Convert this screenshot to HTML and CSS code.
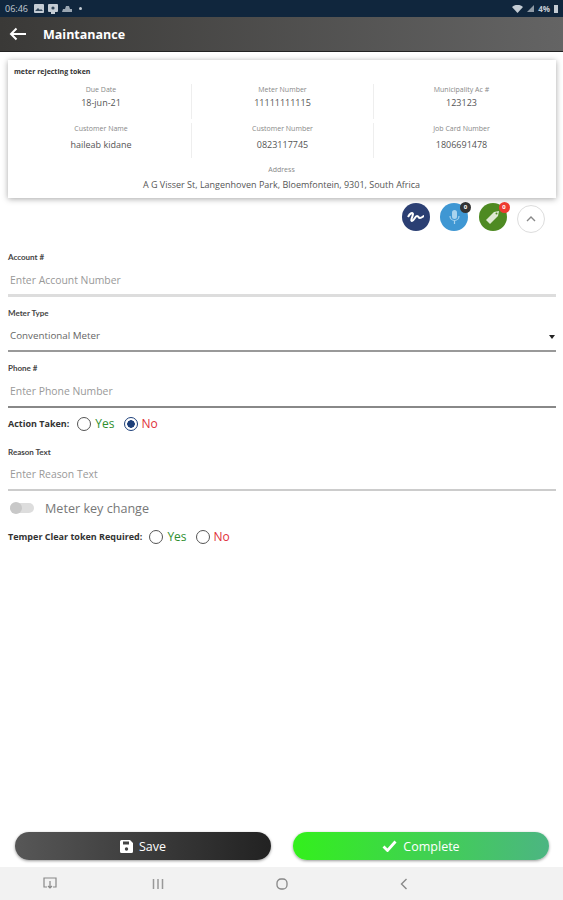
FILE: index.html
```html
<!DOCTYPE html>
<html lang="en">
<head>
  <meta charset="UTF-8">
  <title>Maintanance</title>
  <link rel="stylesheet" href="styles.css">
</head>
<body>

  <div class="statusbar">
    <div class="status-left">
      <span class="clock">06:46</span>
      <svg width="10" height="9" viewBox="0 0 10 9"><rect width="10" height="9" rx="1" fill="#c4ccd4"/><path d="M1 7l3-3 2 2 1-1 2 2z" fill="#33475a"/></svg>
      <svg width="10" height="10" viewBox="0 0 10 10"><rect width="10" height="8" rx="1" fill="#c4ccd4"/><rect x="3" y="8" width="4" height="2" fill="#c4ccd4"/><circle cx="5" cy="4" r="1.6" fill="#33475a"/></svg>
      <svg width="10" height="7" viewBox="0 0 10 7"><path d="M0 7l1-3h2l1-3h3l1 3h2v3z" fill="#9aa6b2"/></svg>
      <span class="dot"></span>
    </div>
    <div class="status-right">
      <svg width="11" height="8" viewBox="0 0 11 8"><path d="M0 2a8 8 0 0 1 11 0L5.500 8z" fill="#c4ccd4"/></svg>
      <svg width="7" height="7" viewBox="0 0 7 7"><path d="M7 0v7H0z" fill="#8e9aa6"/></svg>
      <span class="batt-text">4%</span>
      <span class="batt"></span>
    </div>
  </div>

  <div class="toolbar">
    <svg class="back" width="18" height="14" viewBox="0 0 18 14"><path d="M17 7H2M7.500 1.500L2 7l5.500 5.500" fill="none" stroke="#fff" stroke-width="2"/></svg>
    <span class="title">Maintanance</span>
  </div>

  <div class="card">
    <div class="card-title">meter rejecting token</div>
    <div class="info-grid">
      <div class="info"><div class="info-label">Due Date</div><div class="info-value">18-jun-21</div></div>
      <div class="info"><div class="info-label">Meter Number</div><div class="info-value">11111111115</div></div>
      <div class="info"><div class="info-label">Municipality Ac #</div><div class="info-value">123123</div></div>
      <div class="info"><div class="info-label">Customer Name</div><div class="info-value">haileab kidane</div></div>
      <div class="info"><div class="info-label">Customer Number</div><div class="info-value">0823117745</div></div>
      <div class="info"><div class="info-label">Job Card Number</div><div class="info-value">1806691478</div></div>
    </div>
    <div class="address">
      <div class="info-label">Address</div>
      <div class="info-value">A G Visser St, Langenhoven Park, Bloemfontein, 9301, South Africa</div>
    </div>
  </div>

  <div class="actions">
    <span class="action-btn navy">
      <svg width="18" height="12" viewBox="0 0 18 12"><path d="M1 6c2-4 5-5 5-3s-3 7-1 7 3-5 5-5 1 2 3 2 3-2 4-2" fill="none" stroke="#fff" stroke-width="2"/></svg>
    </span>
    <span class="action-btn blue">
      <svg width="11" height="16" viewBox="0 0 11 16"><rect x="3" y="1" width="5" height="9" rx="2.500" fill="#a9d3ee"/><path d="M1 7a4.500 4.500 0 0 0 9 0M5.500 12v3" fill="none" stroke="#a9d3ee" stroke-width="1.200"/></svg>
      <span class="badge dark">0</span>
    </span>
    <span class="action-btn green">
      <svg width="16" height="16" viewBox="0 0 16 16"><path d="M1 11l8-8 5-1-1 5-8 8z" fill="#dfe9d4"/><circle cx="11.500" cy="4.500" r="1" fill="#4e8a22"/></svg>
      <span class="badge red">0</span>
    </span>
    <span class="collapse-btn">
      <svg width="10" height="6" viewBox="0 0 10 6"><path d="M1 5l4-4 4 4" fill="none" stroke="#888" stroke-width="1.400"/></svg>
    </span>
  </div>

  <form class="form">
    <div class="field account">
      <label>Account #</label>
      <div class="input placeholder">Enter Account Number</div>
    </div>
    <div class="field meter">
      <label>Meter Type</label>
      <div class="input select">Conventional Meter<span class="caret"></span></div>
    </div>
    <div class="field phone">
      <label>Phone #</label>
      <div class="input placeholder">Enter Phone Number</div>
    </div>
    <div class="radio-row action">
      <span class="radio-label">Action Taken:</span>
      <span class="radio"></span><span class="yes">Yes</span>
      <span class="radio checked"></span><span class="no">No</span>
    </div>
    <div class="field reason">
      <label>Reason Text</label>
      <div class="input placeholder">Enter Reason Text</div>
    </div>
    <div class="toggle-row">
      <span class="toggle"><span class="knob"></span></span>
      <span class="toggle-label">Meter key change</span>
    </div>
    <div class="radio-row temper">
      <span class="radio-label">Temper Clear token Required:</span>
      <span class="radio"></span><span class="yes">Yes</span>
      <span class="radio"></span><span class="no">No</span>
    </div>
  </form>

  <div class="buttons">
    <div class="btn save">
      <svg width="13" height="13" viewBox="0 0 13 13"><path d="M1.500 0H10l3 3v8.500a1.500 1.500 0 0 1-1.500 1.500h-10A1.500 1.500 0 0 1 0 11.500v-10A1.500 1.500 0 0 1 1.500 0z" fill="#fff"/><rect x="3" y="1.500" width="6" height="3" fill="#444"/><circle cx="6.500" cy="9" r="1.700" fill="#444"/></svg>
      Save
    </div>
    <div class="btn complete">
      <svg width="15" height="12" viewBox="0 0 15 12"><path d="M1.500 6.500L5.500 10.500 13.500 1.500" fill="none" stroke="#fff" stroke-width="2.800"/></svg>
      Complete
    </div>
  </div>

  <div class="navbar">
    <svg class="nav-first" width="14" height="13" viewBox="0 0 14 13"><path d="M4 10H1V1h12v9h-3M5 9l2 2 2-2M7 4v7" fill="none" stroke="#888" stroke-width="1.200"/></svg>
    <svg width="12" height="10" viewBox="0 0 12 10"><path d="M1.500 0v10M6 0v10M10.500 0v10" stroke="#999" stroke-width="1.500"/></svg>
    <svg width="12" height="12" viewBox="0 0 12 12"><rect x="1" y="1" width="10" height="10" rx="4" fill="none" stroke="#888" stroke-width="1.300"/></svg>
    <svg width="8" height="12" viewBox="0 0 8 12"><path d="M6.500 1L1.500 6l5 5" fill="none" stroke="#888" stroke-width="1.400"/></svg>
  </div>

</body>
</html>
```

FILE: styles.css
```css
* {
  box-sizing: border-box;
}

body {
  margin: 0;
  width: 563px;
  height: 900px;
  display: flex;
  flex-direction: column;
  background: #fff;
  font-family: "Open Sans", Arial, sans-serif;
  overflow: hidden;
}

.statusbar {
  height: 17px;
  flex: none;
  display: flex;
  justify-content: space-between;
  align-items: center;
  padding: 0 5px;
  background: #10263d;
  color: #c4ccd4;
}

.status-left, .status-right {
  display: flex;
  align-items: center;
  gap: 4px;
}

.clock {
  font-size: 9px;
  margin-right: 2px;
}

.dot {
  width: 3px;
  height: 3px;
  margin-left: 3px;
  border-radius: 50%;
  background: #c4ccd4;
}

.batt-text {
  font-size: 8px;
  font-weight: 700;
}

.batt {
  width: 4px;
  height: 8px;
  background: #c4ccd4;
}

.toolbar {
  height: 35px;
  flex: none;
  display: flex;
  align-items: center;
  padding-left: 9px;
  background: linear-gradient(to right, #3a3937, #646464);
  border-bottom: 1px solid #222;
}

.back {
  margin-right: 16px;
}

.title {
  font-size: 12.500px;
  font-weight: 700;
  color: #fff;
}

.card {
  height: 138px;
  flex: none;
  margin: 8px 7px 0 8px;
  padding: 8px 7px 0 6px;
  background: #fff;
  box-shadow: 0 1px 6px rgba(0, 0, 0, 0.35);
}

.card-title {
  font-size: 7px;
  line-height: 8px;
  font-weight: 700;
  color: #333;
}

.info-grid {
  display: grid;
  grid-template-columns: 178px 182px 1fr;
  grid-auto-rows: 35px;
  row-gap: 4px;
  margin-top: 8px;
}

.info {
  padding-top: 1px;
  text-align: center;
  border-right: 1px solid #eee;
}

.info:nth-child(3n+1) {
  padding-right: 3px;
}

.info:nth-child(3n) {
  border-right: none;
}

.info-label {
  font-size: 7px;
  line-height: 10px;
  color: #888;
}

.info-value {
  margin-top: 2px;
  font-size: 9px;
  line-height: 12px;
  color: #555;
}

.info:nth-child(n+4) .info-value {
  margin-top: 5px;
}

.address {
  text-align: center;
  margin-top: 7px;
}

.address .info-value {
  margin-top: 4px;
}

.actions {
  height: 28px;
  flex: none;
  margin-top: 5px;
  display: flex;
  justify-content: flex-end;
  align-items: center;
  gap: 10.500px;
  padding-right: 18px;
}

.action-btn, .collapse-btn {
  position: relative;
  width: 28px;
  height: 28px;
  display: flex;
  align-items: center;
  justify-content: center;
  border-radius: 50%;
}

.navy {
  background: #2b3f73;
}

.blue {
  background: #3f97d3;
}

.green {
  background: #4e8a22;
}

.collapse-btn {
  border: 1px solid #ddd;
  background: #fff;
  top: 2px;
}

.badge {
  position: absolute;
  top: -1px;
  right: -3px;
  width: 11px;
  height: 11px;
  border-radius: 50%;
  font-size: 6px;
  line-height: 11px;
  font-weight: 700;
  text-align: center;
  color: #fff;
}

.dark {
  background: #333;
}

.red {
  background: #ee3b30;
}

.form {
  padding: 0 7px 0 8px;
}

.field label {
  display: block;
  font-family: "Lato", Arial, sans-serif;
  font-size: 8px;
  line-height: 9px;
  font-weight: 700;
  color: #444;
}

.input {
  padding: 11px 2px 0;
  font-size: 10.400px;
  line-height: 14px;
  color: #666;
  border-bottom: 2px solid #999;
}

.placeholder {
  color: #999;
}

.account {
  margin-top: 22px;
}

.account .input {
  height: 35px;
  border-bottom: 3px solid #ddd;
}

.meter {
  margin-top: 12px;
}

.select {
  position: relative;
  height: 34px;
  font-size: 9.800px;
}

.caret {
  position: absolute;
  right: 1px;
  top: 17px;
  border-left: 3.500px solid transparent;
  border-right: 3.500px solid transparent;
  border-top: 4px solid #222;
}

.phone {
  margin-top: 12px;
}

.phone .input {
  height: 35px;
  border-bottom-color: #888;
}

.radio-row {
  display: flex;
  align-items: center;
  font-size: 12px;
  line-height: 16px;
}

.action {
  margin-top: 8px;
}

.radio-label {
  font-size: 9px;
  font-weight: 700;
  color: #333;
  margin-right: 8px;
}

.radio {
  width: 14px;
  height: 14px;
  margin-right: 4px;
  border: 1px solid #555;
  border-radius: 50%;
  background: #fff;
}

.checked {
  border-color: #1d3f7a;
  background: radial-gradient(circle, #1d3f7a 3.500px, #fff 4px);
}

.yes {
  color: #2f8f2f;
  margin-right: 9px;
}

.no {
  color: #e0303a;
}

.reason {
  margin-top: 16px;
}

.reason .input {
  height: 34px;
  padding-top: 10px;
  border-bottom-color: #ccc;
}

.toggle-row {
  display: flex;
  align-items: center;
  margin-top: 8px;
  padding-left: 2px;
  height: 18px;
}

.toggle {
  position: relative;
  width: 24px;
  height: 10px;
  border-radius: 5px;
  background: #ddd;
  margin-right: 11px;
}

.knob {
  position: absolute;
  left: 0;
  top: -1px;
  width: 12px;
  height: 12px;
  border-radius: 50%;
  background: #c8c8c8;
}

.toggle-label {
  font-size: 12.600px;
  color: #777;
}

.temper {
  margin-top: 12px;
}

.temper .radio-label {
  margin-right: 7px;
}

.buttons {
  margin-top: auto;
  display: flex;
  justify-content: space-between;
  padding: 0 14px 7px 15px;
}

.btn {
  width: 256px;
  height: 28px;
  display: flex;
  align-items: center;
  justify-content: center;
  gap: 6px;
  border-radius: 14px;
  font-size: 12.500px;
  color: #fff;
  box-shadow: 0 1px 3px rgba(0, 0, 0, 0.4);
}

.save {
  background: linear-gradient(to right, #575757, #222);
}

.complete {
  background: linear-gradient(to right, #33f01c, #4cb582);
}

.navbar {
  height: 33px;
  flex: none;
  display: flex;
  align-items: center;
  gap: 112px;
  padding-left: 43px;
  background: #f2f2f2;
}

.nav-first {
  margin-right: -17px;
}
```
